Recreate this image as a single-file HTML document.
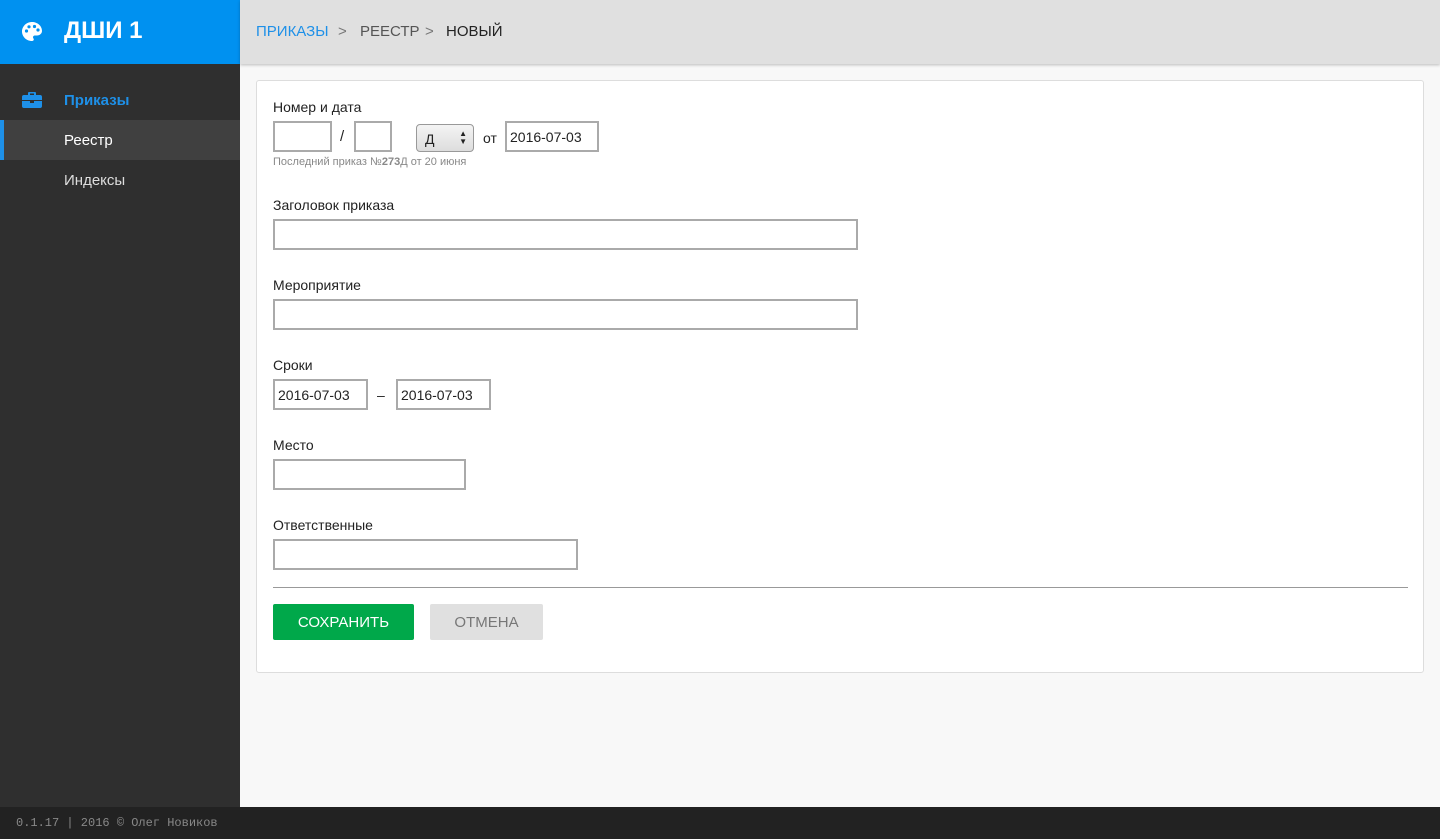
<!DOCTYPE html>
<html><head><meta charset="utf-8"><style>
*{box-sizing:border-box;margin:0;padding:0}
body{width:1440px;height:839px;overflow:hidden;font-family:"Liberation Sans","DejaVu Sans",sans-serif;background:#f8f8f8;position:relative;font-size:14px;color:#222}
.logo{position:absolute;left:0;top:0;width:240px;height:64px;background:#0091f0;color:#fff;font-weight:bold;font-size:24px}
.logo span{position:absolute;left:64px;top:17px}
.top{position:absolute;left:240px;top:0;right:0;height:64px;background:#e0e0e0;box-shadow:0 1px 3px rgba(0,0,0,.25);font-size:15px}
.top div{position:absolute;top:23px}
.side{position:absolute;left:0;top:64px;width:240px;bottom:32px;background:#2f2f2f}
.side .it{position:absolute;left:0;width:240px;height:40px;line-height:42px;padding-left:64px;font-size:15px;color:#ddd}
.foot{position:absolute;left:0;bottom:0;width:1440px;height:32px;background:#222;color:#888;font-family:"Liberation Mono",monospace;font-size:12px;line-height:32px;padding-left:16px}
.card{position:absolute;left:256px;top:80px;width:1168px;height:593px;background:#fff;border:1px solid #ddd;border-radius:3px}
.lbl{position:absolute;left:16px;font-size:14px;margin-top:2px}
.in{position:absolute;height:31px;border:2px solid #aaa;background:#fff;font-size:14px;padding:6px 3px 4px}
</style></head><body>
<div class="logo">
<svg style="position:absolute;left:20px;top:20px" width="24" height="24" viewBox="0 0 24 24"><path fill="#fff" d="M12 2C6.5 2 2 6.3 2 11.5 2 16.7 6.5 21 12 21c1.2 0 1.8-.7 1.8-1.6 0-.9-.8-1.3-.8-2.2 0-1 .8-1.7 1.8-1.7H17c2.8 0 5-2 5-4.6C22 6 17.5 2 12 2z"/><circle cx="6.5" cy="11" r="1.6" fill="#0091f0"/><circle cx="9" cy="6.8" r="1.6" fill="#0091f0"/><circle cx="14.5" cy="6.5" r="1.6" fill="#0091f0"/><circle cx="18" cy="10" r="1.6" fill="#0091f0"/></svg>
<span>ДШИ 1</span></div>
<div class="top"><div style="left:16px;color:#1e90e8">ПРИКАЗЫ</div><div style="left:98px;color:#777">&gt;</div><div style="left:120px;color:#555">РЕЕСТР</div><div style="left:185px;color:#777">&gt;</div><div style="left:206px;color:#222">НОВЫЙ</div></div>
<div class="side">
<svg style="position:absolute;left:22px;top:28px" width="20" height="16" viewBox="0 0 20 16"><path fill="#1e90e8" d="M7 0h6a1 1 0 011 1v2h4a2 2 0 012 2v3H0V5a2 2 0 012-2h4V1a1 1 0 011-1zm1 1.5V3h4V1.5zM0 9h8v2h4V9h8v5a2 2 0 01-2 2H2a2 2 0 01-2-2z"/></svg>
<div class="it" style="top:16px;color:#1e90e8;font-weight:bold">Приказы</div>
<div class="it" style="top:56px;background:#404040;color:#fff;border-left:4px solid #1e90e8;padding-left:60px">Реестр</div>
<div class="it" style="top:96px">Индексы</div>
</div>
<div class="card">
<div class="lbl" style="top:16px">Номер и дата</div>
<div class="in" style="left:16px;top:40px;width:59px"></div>
<div style="position:absolute;left:83px;top:47px;font-size:15px">/</div>
<div class="in" style="left:97px;top:40px;width:38px"></div>
<div style="position:absolute;left:159px;top:43px;width:58px;height:28px;border:1px solid #999;border-radius:4px;background:linear-gradient(#f4f4f4,#ddd);font-size:14px;padding:6px 8px">Д<span style="position:absolute;right:6px;top:5px;font-size:8px;line-height:8px">▲<br>▼</span></div>
<div style="position:absolute;left:226px;top:49px">от</div>
<div class="in" style="left:248px;top:40px;width:94px">2016-07-03</div>
<div style="position:absolute;left:16px;top:75px;font-size:11px;color:#888">Последний приказ №<b>273</b>Д от 20 июня</div>
<div class="lbl" style="top:114px">Заголовок приказа</div>
<div class="in" style="left:16px;top:138px;width:585px"></div>
<div class="lbl" style="top:194px">Мероприятие</div>
<div class="in" style="left:16px;top:218px;width:585px"></div>
<div class="lbl" style="top:274px">Сроки</div>
<div class="in" style="left:16px;top:298px;width:95px">2016-07-03</div>
<div style="position:absolute;left:120px;top:306px">–</div>
<div class="in" style="left:139px;top:298px;width:95px">2016-07-03</div>
<div class="lbl" style="top:354px">Место</div>
<div class="in" style="left:16px;top:378px;width:193px"></div>
<div class="lbl" style="top:434px">Ответственные</div>
<div class="in" style="left:16px;top:458px;width:305px"></div>
<div style="position:absolute;left:16px;top:506px;width:1135px;border-top:1px solid #999"></div>
<div style="position:absolute;left:16px;top:523px;width:141px;height:36px;background:#00a84a;border-radius:2px;color:#fff;text-align:center;line-height:37px;font-size:15px">СОХРАНИТЬ</div>
<div style="position:absolute;left:173px;top:523px;width:113px;height:36px;background:#e0e0e0;border-radius:2px;color:#777;text-align:center;line-height:37px;font-size:15px">ОТМЕНА</div>
</div>
<div class="foot">0.1.17 | 2016 © Олег Новиков</div>
</body></html>
